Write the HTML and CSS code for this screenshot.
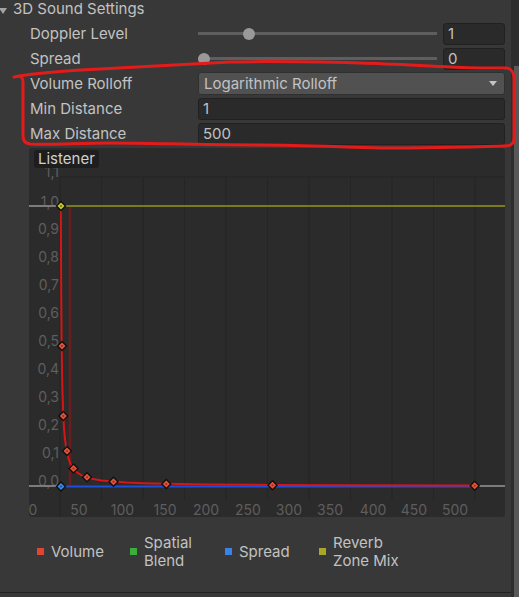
FILE: index.html
```html
<!DOCTYPE html>
<html>
<head>
<meta charset="utf-8">
<link rel="stylesheet" href="styles.css">
</head>
<body>
<div class="inspector">
  <div class="main">
    <div class="header"><span class="foldout"></span><span>3D Sound Settings</span></div>
    <div class="row">
      <span class="label">Doppler Level</span>
      <div class="slider">
        <div class="track"><span class="thumb" style="left:21.3%"></span></div>
        <div class="field num">1</div>
      </div>
    </div>
    <div class="row">
      <span class="label">Spread</span>
      <div class="slider">
        <div class="track"><span class="thumb" style="left:2.6%"></span></div>
        <div class="field num">0</div>
      </div>
    </div>
    <div class="row">
      <span class="label">Volume Rolloff</span>
      <div class="dropdown"><span>Logarithmic Rolloff</span><span class="arrow"></span></div>
    </div>
    <div class="row">
      <span class="label">Min Distance</span>
      <div class="field">1</div>
    </div>
    <div class="row">
      <span class="label">Max Distance</span>
      <div class="field">500</div>
    </div>

    <div class="graph">
      <svg class="plot" width="476" height="369" viewBox="29 148 476 369">
        <g class="grid">
          <line x1="60" y1="177" x2="505" y2="177"/>
          <line x1="60" y1="177" x2="60" y2="517"/>
          <line x1="101.5" y1="177" x2="101.5" y2="500"/>
          <line x1="143" y1="177" x2="143" y2="500"/>
          <line x1="184.5" y1="177" x2="184.5" y2="500"/>
          <line x1="226" y1="177" x2="226" y2="500"/>
          <line x1="267.5" y1="177" x2="267.5" y2="500"/>
          <line x1="309" y1="177" x2="309" y2="500"/>
          <line x1="350.5" y1="177" x2="350.5" y2="500"/>
          <line x1="392" y1="177" x2="392" y2="500"/>
          <line x1="433.5" y1="177" x2="433.5" y2="500"/>
          <line x1="475" y1="177" x2="475" y2="500"/>
        </g>
        <g class="ylabels">
          <text x="59" y="177">1,1</text>
          <text x="59" y="206.5">1,0</text>
          <text x="59" y="234">0,9</text>
          <text x="59" y="262">0,8</text>
          <text x="59" y="290">0,7</text>
          <text x="59" y="318">0,6</text>
          <text x="59" y="346">0,5</text>
          <text x="59" y="374">0,4</text>
          <text x="59" y="402">0,3</text>
          <text x="59" y="430">0,2</text>
          <text x="59" y="458">0,1</text>
          <text x="59" y="486">0,0</text>
        </g>
        <g class="xlabels">
          <text x="33" y="515">0</text>
          <text x="79" y="515">50</text>
          <text x="122.5" y="515">100</text>
          <text x="165" y="515">150</text>
          <text x="206" y="515">200</text>
          <text x="248" y="515">250</text>
          <text x="289" y="515">300</text>
          <text x="330" y="515">350</text>
          <text x="373" y="515">400</text>
          <text x="414" y="515">450</text>
          <text x="455" y="515">500</text>
        </g>
        <line class="ext" x1="29" y1="206" x2="60" y2="206"/>
        <line class="ext" x1="29" y1="486" x2="60" y2="486"/>
        <line class="ext" x1="475" y1="486" x2="505" y2="486"/>
        <line class="minband" x1="70" y1="206" x2="70" y2="486"/>
        <line class="reverb" x1="61" y1="206" x2="505" y2="206"/>
        <line class="spread" x1="61" y1="486.5" x2="475" y2="486.5"/>
        <polyline class="volume" points="60.83,206 61.0,252.7 61.25,299.3 61.66,346 62.08,374 62.49,392.7 63.32,416 64.15,430 64.98,439.3 66.64,451 68.3,458 69.96,462.7 73.28,468.5 76.6,472 80.75,474.8 86.56,477.25 93.2,479 101.5,480.4 113.12,481.6 126.4,482.5 143,483.2 166.24,483.8 209.4,484.4 272.48,484.9 350.5,485.2 475,485.5"/>
        <g class="key red">
          <g transform="translate(62,346)"><path class="o" d="M0,-5.5L5.5,0L0,5.5L-5.5,0Z"/><path class="i" d="M0,-3.5L3.5,0L0,3.5L-3.5,0Z"/><circle r="1"/></g>
          <g transform="translate(63.3,416)"><path class="o" d="M0,-5.5L5.5,0L0,5.5L-5.5,0Z"/><path class="i" d="M0,-3.5L3.5,0L0,3.5L-3.5,0Z"/><circle r="1"/></g>
          <g transform="translate(67,451)"><path class="o" d="M0,-5.5L5.5,0L0,5.5L-5.5,0Z"/><path class="i" d="M0,-3.5L3.5,0L0,3.5L-3.5,0Z"/><circle r="1"/></g>
          <g transform="translate(73.5,468.5)"><path class="o" d="M0,-5.5L5.5,0L0,5.5L-5.5,0Z"/><path class="i" d="M0,-3.5L3.5,0L0,3.5L-3.5,0Z"/><circle r="1"/></g>
          <g transform="translate(87,477.3)"><path class="o" d="M0,-5.5L5.5,0L0,5.5L-5.5,0Z"/><path class="i" d="M0,-3.5L3.5,0L0,3.5L-3.5,0Z"/><circle r="1"/></g>
          <g transform="translate(113.5,481.8)"><path class="o" d="M0,-5.5L5.5,0L0,5.5L-5.5,0Z"/><path class="i" d="M0,-3.5L3.5,0L0,3.5L-3.5,0Z"/><circle r="1"/></g>
          <g transform="translate(166.3,484)"><path class="o" d="M0,-5.5L5.5,0L0,5.5L-5.5,0Z"/><path class="i" d="M0,-3.5L3.5,0L0,3.5L-3.5,0Z"/><circle r="1"/></g>
          <g transform="translate(272.5,485.3)"><path class="o" d="M0,-5.5L5.5,0L0,5.5L-5.5,0Z"/><path class="i" d="M0,-3.5L3.5,0L0,3.5L-3.5,0Z"/><circle r="1"/></g>
          <g transform="translate(474.7,485.7)"><path class="o" d="M0,-5.5L5.5,0L0,5.5L-5.5,0Z"/><path class="i" d="M0,-3.5L3.5,0L0,3.5L-3.5,0Z"/><circle r="1"/></g>
        </g>
        <g class="key yellow" transform="translate(61,206)"><path class="o" d="M0,-5.5L5.5,0L0,5.5L-5.5,0Z"/><path class="i" d="M0,-3.5L3.5,0L0,3.5L-3.5,0Z"/><circle r="1"/></g>
        <g class="key blue" transform="translate(61,486.5)"><path class="o" d="M0,-5.5L5.5,0L0,5.5L-5.5,0Z"/><path class="i" d="M0,-3.5L3.5,0L0,3.5L-3.5,0Z"/><circle r="1"/></g>
      </svg>
      <div class="listener">Listener</div>
    </div>

    <div class="legend">
      <div class="item w1"><span class="sw sw-red"></span><span>Volume</span></div>
      <div class="item w2"><span class="sw sw-green"></span><span>Spatial<br>Blend</span></div>
      <div class="item w3"><span class="sw sw-blue"></span><span>Spread</span></div>
      <div class="item"><span class="sw sw-yellow"></span><span>Reverb<br>Zone Mix</span></div>
    </div>
    <div class="sep"></div>
  </div>
  <div class="scrollbar"><div class="sb-thumb"></div></div>
</div>

<svg class="annotation" width="519" height="160" viewBox="0 0 519 160">
  <path d="M14,77 C30,74 60,71 100,69 C150,66 190,64 230,62 C270,61 320,62 360,63 C400,64 440,67 480,68 L507,68 C512,69 514,72 514,80 L514,138 C514,144 511,146 505,146 C470,147 420,148 380,148 C340,147 300,145 260,145 C200,145 150,143 110,143 C80,143 50,145 30,144 C24,143 23,140 23,134 L23,82 C23,78 22,77 19,76"/>
</svg>
</body>
</html>
```

FILE: styles.css
```css
html, body {
  margin: 0;
  padding: 0;
}
body {
  background: #383838;
  font-family: Inter, "Noto Sans", sans-serif;
  font-size: 15px;
  color: #c2c2c2;
  width: 519px;
  height: 597px;
  overflow: hidden;
  position: relative;
}
.inspector {
  display: flex;
  height: 597px;
}
.main {
  width: 511px;
}
.scrollbar {
  width: 8px;
  background: #2d2d2d;
  padding-top: 66px;
  box-sizing: border-box;
  display: flex;
  justify-content: flex-end;
}
.sb-thumb {
  width: 5px;
  height: 100%;
  background: #585858;
}
.header {
  height: 21px;
  display: flex;
  align-items: center;
  line-height: 18px;
}
.header span:last-child {
  margin-top: -3px;
}
.foldout {
  width: 0;
  height: 0;
  border-left: 4px solid transparent;
  border-right: 4px solid transparent;
  border-top: 6px solid #a3a3a3;
  margin-left: -1px;
  margin-right: 6px;
}
.row {
  display: grid;
  grid-template-columns: 168px 1fr;
  height: 25px;
  align-items: center;
  padding: 0 6px 0 30px;
}
.slider {
  display: flex;
  align-items: center;
  gap: 6px;
}
.track {
  flex: 1;
  height: 3px;
  background: #5e5e5e;
  position: relative;
}
.thumb {
  position: absolute;
  top: 50%;
  width: 12px;
  height: 12px;
  border-radius: 50%;
  background: #999999;
  transform: translate(-50%, -50%);
}
.field {
  height: 22px;
  box-sizing: border-box;
  background: #2a2a2a;
  border: 1px solid #212121;
  border-radius: 3px;
  padding-left: 4px;
  line-height: 20px;
}
.num {
  width: 62px;
}
.dropdown {
  height: 23px;
  box-sizing: border-box;
  background: #515151;
  border: 1px solid #303030;
  border-radius: 3px;
  display: flex;
  align-items: center;
  justify-content: space-between;
  padding: 0 7px 0 5px;
}
.arrow {
  width: 0;
  height: 0;
  border-left: 4px solid transparent;
  border-right: 4px solid transparent;
  border-top: 5px solid #c4c4c4;
}
.graph {
  margin: 2px 0 0 29px;
  width: 476px;
  height: 369px;
  position: relative;
  background: #2b2b2b;
  border-radius: 3px;
  overflow: hidden;
}
.plot {
  display: block;
}
.grid line {
  stroke: #252525;
  stroke-width: 1;
}
.ylabels text {
  font-family: Inter, "Noto Sans", sans-serif;
  font-size: 14px;
  fill: #5e5e5e;
  text-anchor: end;
}
.xlabels text {
  font-family: Inter, "Noto Sans", sans-serif;
  font-size: 14px;
  fill: #5e5e5e;
  text-anchor: middle;
}
.ext {
  stroke: #7c7c7c;
  stroke-width: 2;
}
.minband {
  stroke: #6a1d1d;
  stroke-width: 2.5;
}
.reverb {
  stroke: #7a7a1f;
  stroke-width: 2;
}
.spread {
  stroke: #1d4fdc;
  stroke-width: 2;
}
.volume {
  fill: none;
  stroke: #d41616;
  stroke-width: 2;
}
.key .o {
  fill: #111111;
}
.red .i {
  fill: #e4543a;
}
.red circle {
  fill: #9a2a1a;
}
.yellow .i {
  fill: #c8c830;
}
.yellow circle {
  fill: #6a6a10;
}
.blue .i {
  fill: #3a86e8;
}
.blue circle {
  fill: #1a4a90;
}
.listener {
  position: absolute;
  left: 5px;
  top: 2px;
  height: 18px;
  line-height: 18px;
  padding: 0 4px;
  background: #1e1e1e;
  border-radius: 3px;
  color: #d0d0d0;
}
.legend {
  height: 75px;
  box-sizing: border-box;
  padding: 0 0 6px 37px;
  display: flex;
  align-items: center;
}
.item {
  display: flex;
  align-items: center;
  line-height: 18px;
}
.w1 { width: 93px; }
.w2 { width: 95px; }
.w3 { width: 94px; }
.sw {
  width: 7px;
  height: 7px;
  margin-right: 7px;
  flex-shrink: 0;
}
.sw-red { background: #e0452f; }
.sw-green { background: #3cae3c; }
.sw-blue { background: #3a82e8; }
.sw-yellow { background: #a8a826; }
.sep {
  height: 1px;
  background: #222222;
}
.annotation {
  position: absolute;
  left: 0;
  top: 0;
  pointer-events: none;
}
.annotation path {
  fill: none;
  stroke: #e31b1b;
  stroke-width: 3;
  stroke-linecap: round;
  stroke-linejoin: round;
}
```
